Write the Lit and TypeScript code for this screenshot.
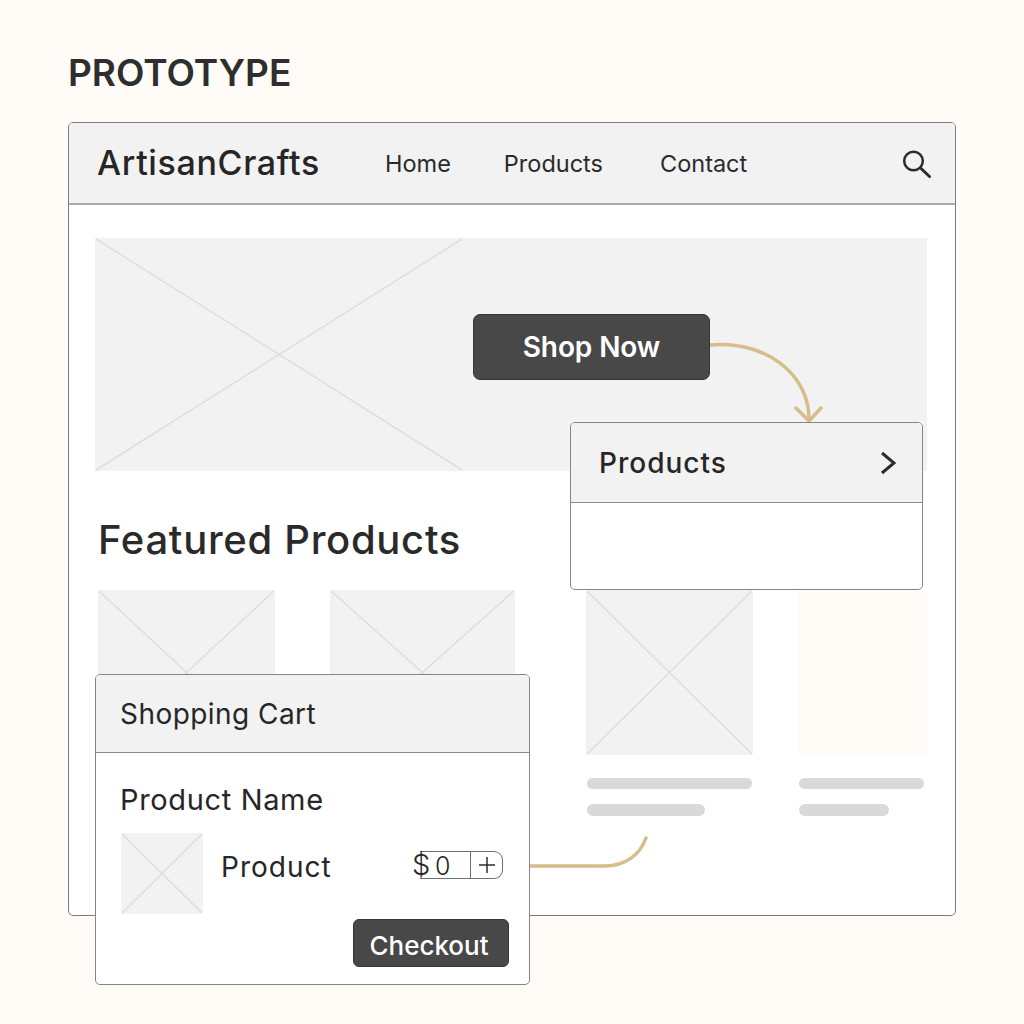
import { LitElement, html, css, svg } from "lit";
import { customElement } from "lit/decorators.js";

const cross = (w: number, h: number) => html`
  <svg class="cross" width=${w} height=${h} viewBox="0 0 ${w} ${h}">
    <path d="M1 1L${w - 1} ${h - 1}M${w - 1} 1L1 ${h - 1}" stroke="#dedede" stroke-width="1.5" fill="none" />
  </svg>
`;

@customElement("app-root")
export class AppRoot extends LitElement {
  static override styles = css`
    :host {
      display: block;
      width: 1024px;
      height: 1024px;
      box-sizing: border-box;
      padding: 51px 68px 0;
      background: #fffcf8;
      color: #262626;
      font-family: Inter, "Liberation Sans", sans-serif;
      overflow: hidden;
    }
    .title {
      margin: 0 0 28px;
      height: 43px;
      line-height: 43px;
      font-size: 37px;
      font-weight: 600;
      color: #2e2e2e;
    }
    .window {
      position: relative;
      box-sizing: border-box;
      width: 888px;
      height: 794px;
      border: 1px solid #7d7d7d;
      border-radius: 5px;
      background: #fff;
    }
    .nav {
      display: flex;
      align-items: center;
      box-sizing: border-box;
      height: 82px;
      padding: 0 24px 0 28px;
      background: #f2f2f2;
      border-bottom: 2px solid #ababab;
      border-radius: 4px 4px 0 0;
    }
    .logo {
      margin-top: -1px;
      font-size: 34px;
      font-weight: 500;
      letter-spacing: 0.65px;
      width: 288px;
    }
    .link {
      font-size: 23.5px;
      color: #2a2a2a;
    }
    .link + .link {
      margin-left: 53px;
    }
    .link + .link + .link {
      margin-left: 57px;
    }
    .search {
      margin-left: auto;
      display: block;
    }
    .hero {
      margin: 33px 0 0 26px;
      width: 832px;
      height: 233px;
      background: #f2f2f2;
    }
    .cross {
      display: block;
    }
    h2 {
      margin: 43px 0 0 29px;
      height: 52px;
      line-height: 52px;
      font-size: 40px;
      font-weight: 500;
      letter-spacing: 0.7px;
      color: #2a2a2a;
    }
    .products {
      display: flex;
      margin: 24px 0 0 29px;
    }
    .img {
      height: 165px;
      background: #f2f2f2;
      border-radius: 3px;
    }
    .warm {
      background: #fffcf7;
    }
    .bar {
      height: 11px;
      margin: 23px 1px 0;
      border-radius: 6px;
      background: #d9d9d9;
    }
    .bar + .bar {
      margin-top: 15px;
      height: 12px;
    }
    .p1 {
      width: 177px;
    }
    .p2 {
      width: 185px;
      margin-left: 55px;
    }
    .p3 {
      width: 167px;
      margin-left: 71px;
    }
    .p4 {
      width: 129px;
      margin-left: 45px;
    }
    .p3 .short {
      width: 118px;
    }
    .p4 .bar {
      margin-right: 3px;
    }
    .p4 .short {
      width: 90px;
    }
    .panel {
      position: absolute;
      box-sizing: border-box;
      background: #fff;
      border: 1px solid #858585;
      border-radius: 5px;
    }
    .menu {
      left: 501px;
      top: 299px;
      width: 353px;
      height: 168px;
    }
    .menu-head {
      display: flex;
      align-items: center;
      justify-content: space-between;
      box-sizing: border-box;
      height: 80px;
      padding: 0 26px 0 28px;
      background: #f2f2f2;
      border-bottom: 1px solid #8c8c8c;
      border-radius: 4px 4px 0 0;
      font-size: 28px;
      font-weight: 500;
      letter-spacing: 1px;
    }
    .cart {
      left: 26px;
      top: 551px;
      width: 435px;
      height: 311px;
    }
    .cart-head {
      box-sizing: border-box;
      height: 78px;
      padding-left: 24px;
      line-height: 78px;
      background: #f2f2f2;
      border-bottom: 1px solid #8c8c8c;
      border-radius: 4px 4px 0 0;
      font-size: 28px;
      letter-spacing: 0.45px;
    }
    .cart-body {
      display: flex;
      flex-direction: column;
      padding: 28px 20px 0 24px;
    }
    .name {
      height: 38px;
      line-height: 38px;
      font-size: 29px;
      letter-spacing: 0.65px;
    }
    .row {
      display: flex;
      margin-top: 14px;
      height: 81px;
    }
    .thumb {
      width: 82px;
      height: 81px;
      margin-left: 1px;
      background: #f2f2f2;
      border-radius: 3px;
    }
    .item {
      margin-left: 18px;
      width: 192px;
      line-height: 68px;
      height: 68px;
      font-size: 28px;
      letter-spacing: 1px;
    }
    .price {
      position: relative;
      width: 90px;
      height: 66px;
    }
    .dollar {
      position: absolute;
      left: -1px;
      top: 13px;
      line-height: 38px;
      font-size: 29px;
      font-weight: 300;
    }
    .stepper {
      position: absolute;
      left: 7px;
      top: 18px;
      display: flex;
      box-sizing: border-box;
      width: 83px;
      height: 28px;
      border: 1px solid #6f6f6f;
      border-left: 0;
      border-radius: 0 9px 9px 0;
    }
    .qty {
      box-sizing: border-box;
      width: 51px;
      padding-left: 15px;
      font-size: 25px;
      font-weight: 300;
      line-height: 28px;
      border-right: 1px solid #6f6f6f;
    }
    .plus {
      display: flex;
      flex: 1;
      align-items: center;
      justify-content: center;
    }
    .checkout {
      align-self: flex-end;
      box-sizing: border-box;
      width: 156px;
      height: 48px;
      margin-top: 5px;
      border: 1px solid #363636;
      border-radius: 6px;
      background: #484848;
      color: #fff;
      font: 500 26px/46px Inter, "Liberation Sans", sans-serif;
      text-align: center;
      padding: 3px 4px 0 0;
    }
    .shop {
      position: absolute;
      left: 404px;
      top: 191px;
      box-sizing: border-box;
      width: 237px;
      height: 66px;
      border: 1px solid #363636;
      border-radius: 7px;
      background: #484848;
      color: #fff;
      font: 600 28px/64px Inter, "Liberation Sans", sans-serif;
      letter-spacing: -0.1px;
      text-align: center;
      padding: 0;
    }
    .flow {
      position: absolute;
      left: 0;
      top: 0;
      pointer-events: none;
    }
  `;

  override render() {
    return html`
      <h1 class="title">PROTOTYPE</h1>
      <div class="window">
        <header class="nav">
          <span class="logo">ArtisanCrafts</span>
          <span class="link">Home</span>
          <span class="link">Products</span>
          <span class="link">Contact</span>
          <svg class="search" width="30" height="30" viewBox="0 0 30 30" fill="none" stroke="#2c2c2c" stroke-width="2.5" stroke-linecap="round">
            <circle cx="12.5" cy="13" r="9.3" />
            <path d="M19.5 20L28.5 28.5" stroke-width="3" />
          </svg>
        </header>
        <div class="hero">${cross(368, 233)}</div>
        <h2>Featured Products</h2>
        <div class="products">
          <div class="p1"><div class="img">${cross(177, 165)}</div></div>
          <div class="p2"><div class="img">${cross(185, 165)}</div></div>
          <div class="p3">
            <div class="img">${cross(167, 165)}</div>
            <div class="bar"></div>
            <div class="bar short"></div>
          </div>
          <div class="p4">
            <div class="img warm"></div>
            <div class="bar"></div>
            <div class="bar short"></div>
          </div>
        </div>

        <svg class="flow" width="886" height="792" viewBox="0 0 886 792" fill="none" stroke="#d6bd8a" stroke-width="3.5" stroke-linecap="round">
          ${svg`<path d="M461 743H536C556 743 571 732 577 715" />`}
          ${svg`<path d="M641 222C695 217 741 250 740 298M727 285L740 298L752 285" />`}
        </svg>

        <button class="shop">Shop Now</button>

        <div class="panel menu">
          <div class="menu-head">
            <span>Products</span>
            <svg width="16" height="24" viewBox="0 0 16 24" fill="none" stroke="#2c2c2c" stroke-width="3">
              <path d="M2 2L14 12L2 22" />
            </svg>
          </div>
        </div>

        <div class="panel cart">
          <div class="cart-head">Shopping Cart</div>
          <div class="cart-body">
            <div class="name">Product Name</div>
            <div class="row">
              <div class="thumb">${cross(82, 81)}</div>
              <div class="item">Product</div>
              <div class="price">
                <div class="stepper">
                  <div class="qty">0</div>
                  <div class="plus">
                    <svg width="18" height="18" viewBox="0 0 18 18" stroke="#2c2c2c" stroke-width="1.5">
                      <path d="M9 1V17M1 9H17" />
                    </svg>
                  </div>
                </div>
                <span class="dollar">$</span>
              </div>
            </div>
            <button class="checkout">Checkout</button>
          </div>
        </div>
      </div>
    `;
  }
}
